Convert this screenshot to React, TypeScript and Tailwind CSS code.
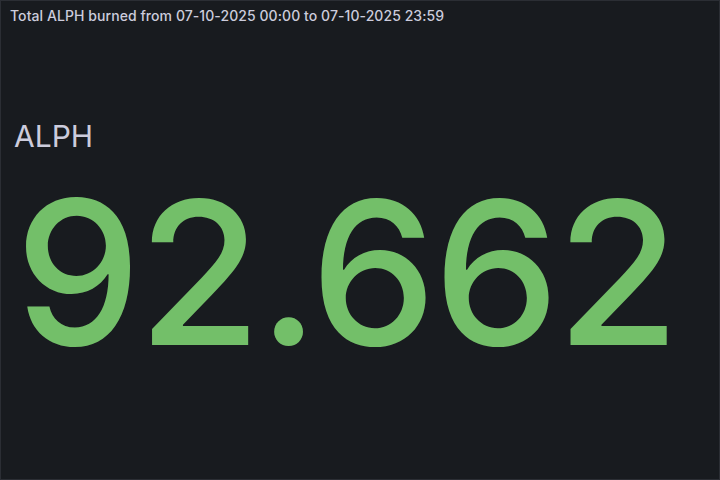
export default function App() {
    return (
        <div className="flex h-[480px] w-[720px] flex-col border border-[#2b2e34] bg-[#181b1f] font-['Inter',sans-serif]">
            <div className="pl-[9px] pt-2 text-sm font-medium leading-none tracking-[0.07px] text-[#ccccdc]">
                Total ALPH burned from 07-10-2025 00:00 to 07-10-2025 23:59
            </div>

            <div className="mt-[98px] pl-[13px] text-[30px] leading-none text-[#ccccdc]">
                ALPH
            </div>

            <div className="mt-[21px] pl-[14px] text-[200px] font-medium leading-none tracking-[-3px] text-[#73bf69]">
                92.662
            </div>
        </div>
    );
}
